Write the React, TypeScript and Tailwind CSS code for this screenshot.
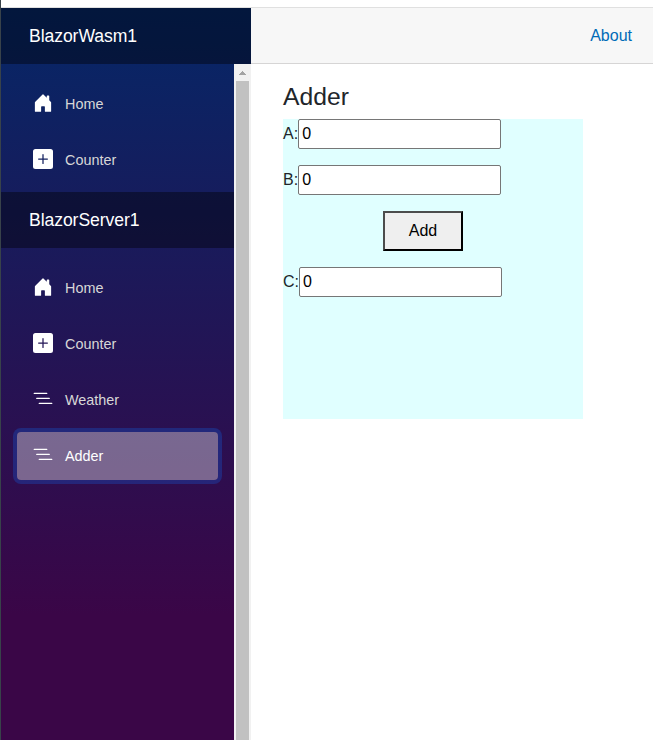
import React from 'react';

const HOUSE =
  'M6.5 14.5v-3.505c0-.245.25-.495.5-.495h2c.25 0 .5.25.5.5v3.5a.5.5 0 0 0 .5.5h4a.5.5 0 0 0 .5-.5v-7a.5.5 0 0 0-.146-.354L13 5.793V2.5a.5.5 0 0 0-.5-.5h-1a.5.5 0 0 0-.5.5v1.293L8.354 1.146a.5.5 0 0 0-.708 0l-6 6A.5.5 0 0 0 1.5 7.5v7a.5.5 0 0 0 .5.5h4a.5.5 0 0 0 .5-.5Z';
const PLUS =
  'M2 0a2 2 0 0 0-2 2v12a2 2 0 0 0 2 2h12a2 2 0 0 0 2-2V2a2 2 0 0 0-2-2H2zm6.5 4.5v3h3a.5.5 0 0 1 0 1h-3v3a.5.5 0 0 1-1 0v-3h-3a.5.5 0 0 1 0-1h3v-3a.5.5 0 0 1 1 0z';
const LIST =
  'M4.5 11.5A.5.5 0 0 1 5 11h10a.5.5 0 0 1 0 1H5a.5.5 0 0 1-.5-.5zm-2-4A.5.5 0 0 1 3 7h10a.5.5 0 0 1 0 1H3a.5.5 0 0 1-.5-.5zm-2-4A.5.5 0 0 1 1 3h10a.5.5 0 0 1 0 1H1a.5.5 0 0 1-.5-.5z';

function NavItem({ icon, label, active = false }: { icon: string; label: string; active?: boolean }) {
  return (
    <a
      href="#"
      className={
        'flex h-12 shrink-0 items-center rounded px-4 text-[14.4px] ' +
        (active ? 'bg-white/37 text-white shadow-[0_0_0_4px_rgba(13,110,253,0.25)]' : 'text-[#d7d7d7]')
      }
    >
      <svg viewBox="0 0 16 16" className="mr-3 mb-0.5 size-5 shrink-0 fill-white">
        <path d={icon} />
      </svg>
      <span className="pt-0.5">{label}</span>
    </a>
  );
}

function Brand({ name }: { name: string }) {
  return (
    <div className="flex h-14 shrink-0 items-center bg-black/40 pl-7 text-[17.6px] tracking-[-0.08px] text-white">
      {name}
    </div>
  );
}

function Field({ label }: { label: string }) {
  return (
    <div className="flex h-[30px] items-center">
      <label>{label}:</label>
      <input
        defaultValue="0"
        className="h-[30px] w-[203px] rounded-[2px] border border-[#767676] bg-white px-[3px] text-black"
      />
    </div>
  );
}

export default function App() {
  return (
    <div className="flex h-[740px] w-full overflow-hidden bg-white font-['Liberation_Sans',Arial,sans-serif] text-base text-[#212529]">
      <div className="w-px shrink-0 bg-[#38424a]" />
      <div className="flex min-w-0 flex-1 flex-col">
        <div className="h-2 shrink-0 border-b border-[#e0e0e0]" />
        <div className="flex min-h-0 flex-1">
          <aside className="flex w-[250px] shrink-0 flex-col bg-[linear-gradient(180deg,rgb(5,39,103)_0px,#3a0647_606px)]">
            <Brand name="BlazorWasm1" />
            <div className="flex min-h-0 flex-1">
              <nav className="flex flex-1 flex-col">
                <div className="flex flex-col gap-2 px-4 pt-4 pb-2">
                  <NavItem icon={HOUSE} label="Home" />
                  <NavItem icon={PLUS} label="Counter" />
                </div>
                <Brand name="BlazorServer1" />
                <div className="flex flex-col gap-2 px-4 pt-4">
                  <NavItem icon={HOUSE} label="Home" />
                  <NavItem icon={PLUS} label="Counter" />
                  <NavItem icon={LIST} label="Weather" />
                  <NavItem icon={LIST} label="Adder" active />
                </div>
              </nav>
              <div className="flex w-[17px] shrink-0 flex-col items-center bg-[#f1f1f1]">
                <svg viewBox="0 0 17 17" className="size-[17px] shrink-0 fill-[#a3a3a3]" shapeRendering="crispEdges">
                  <path d="M8 7h1v1h1v1h1v1h1v1H5v-1h1V9h1V8h1z" />
                </svg>
                <div className="w-[13px] flex-1 bg-[#c1c1c1]" />
              </div>
            </div>
          </aside>
          <main className="flex min-w-0 flex-1 flex-col">
            <div className="flex h-14 shrink-0 items-center justify-end border-b border-[#d6d5d5] bg-[#f7f7f7] pr-[21px]">
              <a href="#" className="text-[#006bb7]">About</a>
            </div>
            <div className="pt-[18px] pl-8">
              <h3 className="mb-[7px] h-[30px] text-[24.7px] leading-[30px]">Adder</h3>
              <div className="flex h-[300px] w-[300px] flex-col gap-4 bg-[#e0ffff]">
                <Field label="A" />
                <Field label="B" />
                <button className="ml-[100px] h-10 w-20 shrink-0 border-2 border-t-[#4c4c4c] border-r-black border-b-black border-l-[#4c4c4c] bg-[#efefef] text-black">
                  Add
                </button>
                <Field label="C" />
              </div>
            </div>
          </main>
        </div>
      </div>
    </div>
  );
}
